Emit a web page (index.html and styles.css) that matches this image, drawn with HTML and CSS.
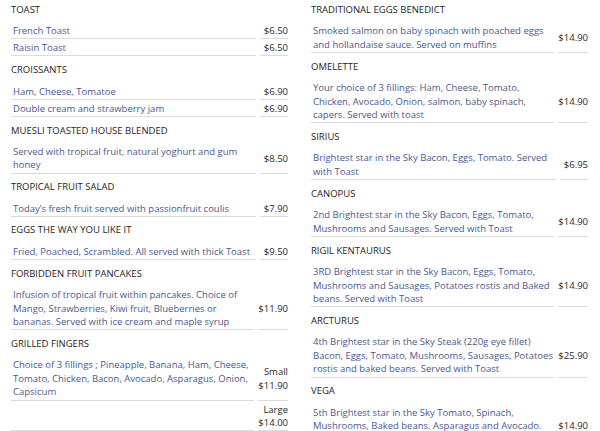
FILE: index.html
```html
<!DOCTYPE html>
<html>
<head>
<meta charset="utf-8">
<link rel="stylesheet" href="styles.css">
</head>
<body>
<div class="menu">
  <div class="col">
    <section class="sec">
      <h3 class="head">TOAST</h3>
      <div class="items">
        <div class="desc">French Toast</div><div class="price">$6.50</div>
        <div class="desc">Raisin Toast</div><div class="price">$6.50</div>
      </div>
    </section>
    <section class="sec">
      <h3 class="head">CROISSANTS</h3>
      <div class="items">
        <div class="desc">Ham, Cheese, Tomatoe</div><div class="price">$6.90</div>
        <div class="desc">Double cream and strawberry jam</div><div class="price">$6.90</div>
      </div>
    </section>
    <section class="sec">
      <h3 class="head">MUESLI TOASTED HOUSE BLENDED</h3>
      <div class="items">
        <div class="desc">Served with tropical fruit, natural yoghurt and gum honey</div><div class="price">$8.50</div>
      </div>
    </section>
    <section class="sec">
      <h3 class="head">TROPICAL FRUIT SALAD</h3>
      <div class="items">
        <div class="desc">Today’s fresh fruit served with passionfruit coulis</div><div class="price">$7.90</div>
      </div>
    </section>
    <section class="sec">
      <h3 class="head">EGGS THE WAY YOU LIKE IT</h3>
      <div class="items">
        <div class="desc">Fried, Poached, Scrambled. All served with thick Toast</div><div class="price">$9.50</div>
      </div>
    </section>
    <section class="sec">
      <h3 class="head">FORBIDDEN FRUIT PANCAKES</h3>
      <div class="items">
        <div class="desc">Infusion of tropical fruit within pancakes. Choice of Mango, Strawberries, Kiwi fruit, Blueberries or bananas. Served with ice cream and maple syrup</div><div class="price">$11.90</div>
      </div>
    </section>
    <section class="sec">
      <h3 class="head">GRILLED FINGERS</h3>
      <div class="items">
        <div class="desc">Choice of 3 fillings ; Pineapple, Banana, Ham, Cheese, Tomato, Chicken, Bacon, Avocado, Asparagus, Onion, Capsicum</div><div class="price">Small<br>$11.90</div>
        <div class="desc"></div><div class="price">Large<br>$14.00</div>
      </div>
    </section>
  </div>
  <div class="col">
    <section class="sec">
      <h3 class="head">TRADITIONAL EGGS BENEDICT</h3>
      <div class="items">
        <div class="desc">Smoked salmon on baby spinach with poached eggs and hollandaise sauce. Served on muffins</div><div class="price">$14.90</div>
      </div>
    </section>
    <section class="sec">
      <h3 class="head">OMELETTE</h3>
      <div class="items">
        <div class="desc">Your choice of 3 fillings: Ham, Cheese, Tomato, Chicken, Avocado, Onion, salmon, baby spinach, capers. Served with toast</div><div class="price">$14.90</div>
      </div>
    </section>
    <section class="sec">
      <h3 class="head">SIRIUS</h3>
      <div class="items">
        <div class="desc">Brightest star in the Sky Bacon, Eggs, Tomato. Served with Toast</div><div class="price">$6.95</div>
      </div>
    </section>
    <section class="sec">
      <h3 class="head">CANOPUS</h3>
      <div class="items">
        <div class="desc">2nd Brightest star in the Sky Bacon, Eggs, Tomato, Mushrooms and Sausages. Served with Toast</div><div class="price">$14.90</div>
      </div>
    </section>
    <section class="sec">
      <h3 class="head">RIGIL KENTAURUS</h3>
      <div class="items">
        <div class="desc">3RD Brightest star in the Sky Bacon, Eggs, Tomato, Mushrooms and Sausages, Potatoes rostis and Baked beans. Served with Toast</div><div class="price">$14.90</div>
      </div>
    </section>
    <section class="sec">
      <h3 class="head">ARCTURUS</h3>
      <div class="items">
        <div class="desc">4th Brightest star in the Sky Steak (220g eye fillet) Bacon, Eggs, Tomato, Mushrooms, Sausages, Potatoes rostis and baked beans. Served with Toast</div><div class="price">$25.90</div>
      </div>
    </section>
    <section class="sec">
      <h3 class="head">VEGA</h3>
      <div class="items">
        <div class="desc">5th Brightest star in the Sky Tomato, Spinach, Mushrooms, Baked beans, Asparagus and Avocado. Served with Toast</div><div class="price">$14.90</div>
      </div>
    </section>
  </div>
</div>
</body>
</html>
```
FILE: styles.css
```css
html, body {
  margin: 0;
  padding: 0;
  background: #ffffff;
}
body {
  font-family: "Open Sans", "Liberation Sans", sans-serif;
  font-size: 9.5px;
  line-height: 13.6px;
  color: #222;
  overflow: hidden;
}
.menu {
  display: grid;
  grid-template-columns: 1fr 1fr;
  column-gap: 23px;
  padding: 0 12px 0 11px;
}
.col {
  display: flex;
  flex-direction: column;
}
.head {
  margin: 3px 0 6.7px;
  font-size: 9.5px;
  font-weight: normal;
  line-height: 13.6px;
  color: #1e1e1e;
}
.sec + .sec .head {
  margin-top: 6.8px;
}
.items {
  display: grid;
  grid-template-columns: 1fr auto;
  column-gap: 4px;
  row-gap: 1px;
}
.desc, .price {
  padding: 1px 0 0.5px;
  border-bottom: 1px solid #dcdcdc;
}
.desc {
  padding-left: 2px;
  color: #4a5890;
}
.price {
  color: #2a2a2a;
  text-align: right;
  display: flex;
  align-items: center;
  justify-content: flex-end;
  min-width: 28px;
}
```
